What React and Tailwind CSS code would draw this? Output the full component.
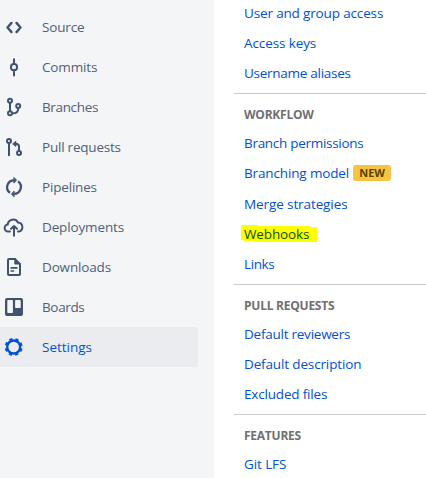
const Svg = ({ children }) => (
  <svg
    width="28"
    height="40"
    viewBox="0 0 28 40"
    fill="none"
    stroke="currentColor"
    strokeWidth="2"
    strokeLinecap="round"
    strokeLinejoin="round"
    className="shrink-0"
  >
    {children}
  </svg>
);

const icons = {
  source: (
    <Svg>
      <path d="M11.500 15.900 7.500 20.500l4 4.600M16.500 15.900l4 4.600-4 4.600" strokeWidth="2.400" />
    </Svg>
  ),
  commits: (
    <Svg>
      <circle cx="14" cy="20.2" r="3.1" />
      <path d="M14 12.2v4M14 24.4v4" />
    </Svg>
  ),
  branches: (
    <Svg>
      <circle cx="10" cy="13.7" r="2" />
      <circle cx="10" cy="26.3" r="2" />
      <circle cx="18.2" cy="19" r="2" />
      <path d="M10 16v8M18.2 21.4c0 3-1.8 4.9-5.6 4.9" />
    </Svg>
  ),
  pulls: (
    <Svg>
      <circle cx="9" cy="14" r="2" />
      <circle cx="19" cy="26" r="2" />
      <path d="M9 16.4v11.8M19 23.6v-4c0-2-1.1-2.9-3.5-2.9" />
      <path d="M13 16.700 15.800 14.300v4.800Z" fill="currentColor" strokeWidth="1" />
    </Svg>
  ),
  pipelines: (
    <Svg>
      <path d="M10 25.800a6.900 6.900 0 0 1 4.200-12.500M18 14.400a6.900 6.900 0 0 1-4.200 12.500" strokeWidth="2.300" strokeLinecap="butt" />
      <path d="m14.200 10.700 2.300 2.400-2.300 2.700ZM13.800 29.500l-2.300-2.400 2.300-2.700Z" fill="currentColor" strokeWidth="1" />
    </Svg>
  ),
  deployments: (
    <Svg>
      <path d="M10 24.4H8.4a3.4 3.4 0 0 1-.7-6.8 5.5 5.5 0 0 1 10.3-2.1 4.6 4.6 0 0 1 1.4 8.9H18" />
      <path d="M14 28.7v-9M11 21.8l3-2.8 3 2.8" />
    </Svg>
  ),
  downloads: (
    <Svg>
      <path d="M15 12H9a1 1 0 0 0-1 1v14a1 1 0 0 0 1 1h10a1 1 0 0 0 1-1v-9.5" />
      <path d="M15 11.8v5h5.2Z" fill="currentColor" strokeWidth="1.4" />
      <path d="M11.2 20.9h5.6M11.2 24h2.3" strokeWidth="1.7" />
    </Svg>
  ),
  boards: (
    <Svg>
      <path
        d="M7 11h14a2 2 0 0 1 2 2v14a2 2 0 0 1-2 2H7a2 2 0 0 1-2-2V13a2 2 0 0 1 2-2Zm1 2a.7.7 0 0 0-.7.7v11.600a.7.7 0 0 0 .7.7h4.200a.7.7 0 0 0 .7-.7V13.700a.7.7 0 0 0-.7-.7Zm7.800 0a.7.7 0 0 0-.7.7V20.300a.7.7 0 0 0 .7.7H20a.7.7 0 0 0 .7-.7V13.700a.7.7 0 0 0-.7-.7Z"
        fill="currentColor"
        fillRule="evenodd"
        stroke="none"
      />
    </Svg>
  ),
  settings: (
    <Svg>
      <circle cx="13.700" cy="20" r="6.500" strokeWidth="2.400" />
      <circle
        cx="13.700"
        cy="20"
        r="7.900"
        strokeWidth="2.200"
        strokeLinecap="butt"
        strokeDasharray="3.200 3.005"
        transform="rotate(11 13.700 20)"
      />
    </Svg>
  ),
};

const nav = [
  ["Source", "source", "tracking-[-0.15px]"],
  ["Commits", "commits", "tracking-[-0.15px]"],
  ["Branches", "branches", "tracking-[-0.35px]"],
  ["Pull requests", "pulls", "tracking-[-0.22px]"],
  ["Pipelines", "pipelines", "tracking-[-0.18px]"],
  ["Deployments", "deployments", "tracking-[-0.14px]"],
  ["Downloads", "downloads", "tracking-[-0.16px]"],
  ["Boards", "boards", "tracking-[-0.35px]"],
  ["Settings", "settings", "tracking-normal"],
];

const Item = ({ children, className = "" }) => (
  <a className={`flex h-[30px] items-center whitespace-nowrap pl-[10px] ${className}`}>{children}</a>
);

const Heading = ({ children }) => (
  <h2 className="flex h-[34px] items-center whitespace-nowrap pl-[10px] pt-[7px] text-[12px] font-bold tracking-[-0.24px] text-[#707070]">
    {children}
  </h2>
);

export default function App() {
  return (
    <div className="flex h-[478px] w-[426px] overflow-hidden bg-white font-['Open_Sans','Noto_Sans',sans-serif] text-[13.5px]">
      <nav className="w-[214px] shrink-0 bg-[#f4f5f7] pt-[7px] text-[#505f79]">
        {nav.map(([label, icon, tracking]) => (
          <a
            key={label}
            className={`flex h-10 w-[198px] items-center gap-[14px] whitespace-nowrap rounded-r-[3px] ${
              label === "Settings" ? "bg-[#ebecf0] text-[#0052cc]" : ""
            }`}
          >
            <span className={label === "Settings" ? "" : "text-[#42526e]"}>{icons[icon]}</span>
            <span className={tracking}>{label}</span>
          </a>
        ))}
      </nav>
      <main className="ml-5 flex-1 text-[#0052cc]">
        <section className="flex h-[93px] flex-col">
          <Item className="-mt-[2px] tracking-[-0.15px]">User and group access</Item>
          <Item className="tracking-[-0.1px]">Access keys</Item>
          <Item className="tracking-[-0.27px]">Username aliases</Item>
        </section>
        <section className="h-[191px] border-t border-[#ccc]">
          <Heading>WORKFLOW</Heading>
          <Item className="tracking-[-0.29px]">Branch permissions</Item>
          <Item className="gap-1 tracking-[-0.14px]">
            Branching model
            <span className="flex h-4 w-[38px] items-center justify-center rounded-[3px] bg-[#f6c342] text-[11px] font-bold tracking-normal text-[#594300]">
              NEW
            </span>
          </Item>
          <Item className="mt-px tracking-[-0.1px]">Merge strategies</Item>
          <Item className="tracking-[-0.12px]">
            <span className="relative">
              <svg className="absolute -left-[3px] top-[1px]" width="76" height="18" viewBox="0 0 76 18">
                <path d="M0 0h17v1h52v1h7v15H12v-1H3v-1H0Z" fill="#ff0" />
              </svg>
              <span className="relative text-[#005200]">Webhooks</span>
            </span>
          </Item>
          <Item className="tracking-[-0.4px]">Links</Item>
        </section>
        <section className="h-[130px] border-t border-[#ccc]">
          <Heading>PULL REQUESTS</Heading>
          <Item className="tracking-[-0.24px]">Default reviewers</Item>
          <Item className="tracking-[-0.14px]">Default description</Item>
          <Item className="tracking-[-0.18px]">Excluded files</Item>
        </section>
        <section className="border-t border-[#ccc]">
          <Heading>FEATURES</Heading>
          <Item className="tracking-[-0.1px]">Git LFS</Item>
        </section>
      </main>
    </div>
  );
}
